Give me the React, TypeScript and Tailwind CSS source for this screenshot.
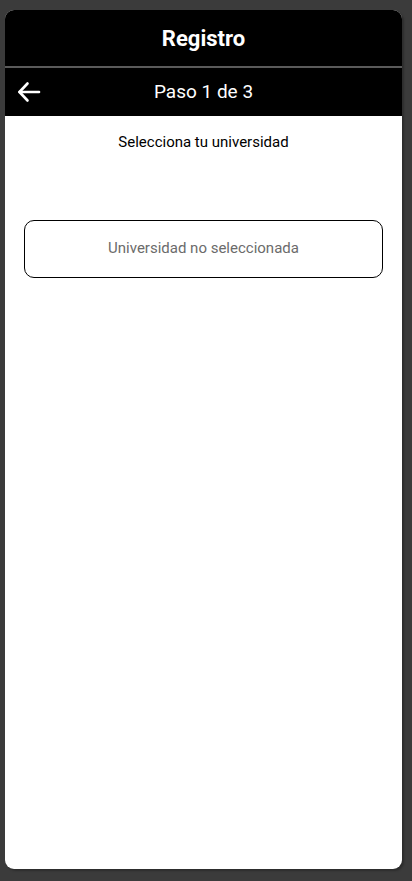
export default function App() {
  return (
    <div
      className="h-[881px] w-[412px] bg-[#3b3b3b] pt-[10px] pl-[5px] pr-[10px] pb-[12px]"
      style={{ fontFamily: 'Roboto, "Noto Sans", sans-serif' }}
    >
      <div className="flex h-full flex-col overflow-hidden rounded-[9px] bg-white shadow-[2px_2px_2px_rgba(0,0,0,0.25)]">
        {/* Header */}
        <div className="flex h-[56px] items-center justify-center bg-black">
          <h1 className="text-[22px] font-bold text-white">Registro</h1>
        </div>
        <div className="h-[2px] bg-[#5a5a5a]" />

        {/* Step bar */}
        <div className="relative flex h-[48px] items-center justify-center bg-black">
          <button className="absolute left-[12px] top-1/2 -translate-y-1/2">
            <svg width="24" height="22" viewBox="0 0 24 22" fill="none" stroke="white" strokeWidth="2.6" strokeLinecap="round" strokeLinejoin="round">
              <path d="M22 11H2.5" />
              <path d="M10.5 2.5 2.5 11l8 8.5" />
            </svg>
          </button>
          <span className="text-[19px] text-white">Paso 1 de 3</span>
        </div>

        {/* Content */}
        <div className="flex flex-1 flex-col px-[19px]">
          <p className="mt-[15px] text-center text-[15px] text-black">Selecciona tu universidad</p>
          <button className="mt-[66px] flex h-[58px] w-full items-center justify-center rounded-[10px] border border-black bg-white">
            <span className="text-[15px] text-[#6b6b6b]">Universidad no seleccionada</span>
          </button>
        </div>
      </div>
    </div>
  );
}
